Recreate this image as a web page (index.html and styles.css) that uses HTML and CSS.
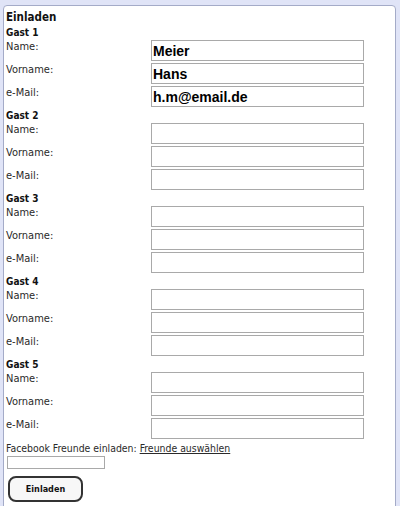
FILE: index.html
```html
<!DOCTYPE html>
<html lang="de">
<head>
    <meta charset="UTF-8">
    <title>Einladen</title>
    <link rel="stylesheet" href="styles.css">
</head>
<body>
    <div class="panel">
        <h1>Einladen</h1>

        <div class="guest">
            <h2>Gast 1</h2>
            <div class="row"><label>Name:</label><input type="text" value="Meier"></div>
            <div class="row"><label>Vorname:</label><input type="text" value="Hans"></div>
            <div class="row"><label>e-Mail:</label><input type="text" value="h.m@email.de"></div>
        </div>
        <div class="guest">
            <h2>Gast 2</h2>
            <div class="row"><label>Name:</label><input type="text"></div>
            <div class="row"><label>Vorname:</label><input type="text"></div>
            <div class="row"><label>e-Mail:</label><input type="text"></div>
        </div>
        <div class="guest">
            <h2>Gast 3</h2>
            <div class="row"><label>Name:</label><input type="text"></div>
            <div class="row"><label>Vorname:</label><input type="text"></div>
            <div class="row"><label>e-Mail:</label><input type="text"></div>
        </div>
        <div class="guest">
            <h2>Gast 4</h2>
            <div class="row"><label>Name:</label><input type="text"></div>
            <div class="row"><label>Vorname:</label><input type="text"></div>
            <div class="row"><label>e-Mail:</label><input type="text"></div>
        </div>
        <div class="guest">
            <h2>Gast 5</h2>
            <div class="row"><label>Name:</label><input type="text"></div>
            <div class="row"><label>Vorname:</label><input type="text"></div>
            <div class="row"><label>e-Mail:</label><input type="text"></div>
        </div>

        <div class="facebook">Facebook Freunde einladen: <a href="#">Freunde auswählen</a></div>
        <input type="text" class="fb-input">
        <div>
            <button class="submit">Einladen</button>
        </div>
    </div>
</body>
</html>
```

FILE: styles.css
```css
body {
    margin: 0;
    background: #e0e4f7;
    font-family: "DejaVu Sans Condensed", "DejaVu Sans", sans-serif;
    font-size: 11px;
    color: #2a2a2a;
    height: 506px;
    overflow: hidden;
}

.panel {
    margin: 5px 4px 0 3px;
    padding: 3px 2px 20px 2px;
    background: #fff;
    border: 1px solid #a4abc8;
    border-radius: 4px;
}

h1 {
    margin: 0;
    font-size: 11.5px;
    line-height: 17px;
    color: #111;
}

h2 {
    margin: 0;
    font-size: 10px;
    line-height: 14px;
    color: #111;
}

.row {
    display: flex;
    align-items: flex-start;
    height: 23px;
}

.row label {
    width: 145px;
    line-height: 13px;
}

.row input {
    width: 213px;
    height: 21px;
    box-sizing: border-box;
    margin: 0;
    padding: 0 1px;
    border: 1px solid #a9a9a9;
    font-family: "Liberation Sans", Arial, sans-serif;
    font-weight: bold;
    font-size: 14px;
    color: #000;
}

.facebook {
    font-size: 10.4px;
    line-height: 15px;
}

.facebook a {
    color: #2a2a2a;
}

.fb-input {
    display: block;
    width: 98px;
    height: 13px;
    box-sizing: border-box;
    margin: 0 0 0 1px;
    border: 1px solid #a9a9a9;
}

.submit {
    margin: 7px 0 0 2px;
    width: 75px;
    height: 26px;
    background: #f7f7f7;
    border: 2px solid #333;
    border-radius: 8px;
    font-family: "DejaVu Sans Condensed", "DejaVu Sans", sans-serif;
    font-size: 9px;
    font-weight: bold;
    color: #111;
}
```
